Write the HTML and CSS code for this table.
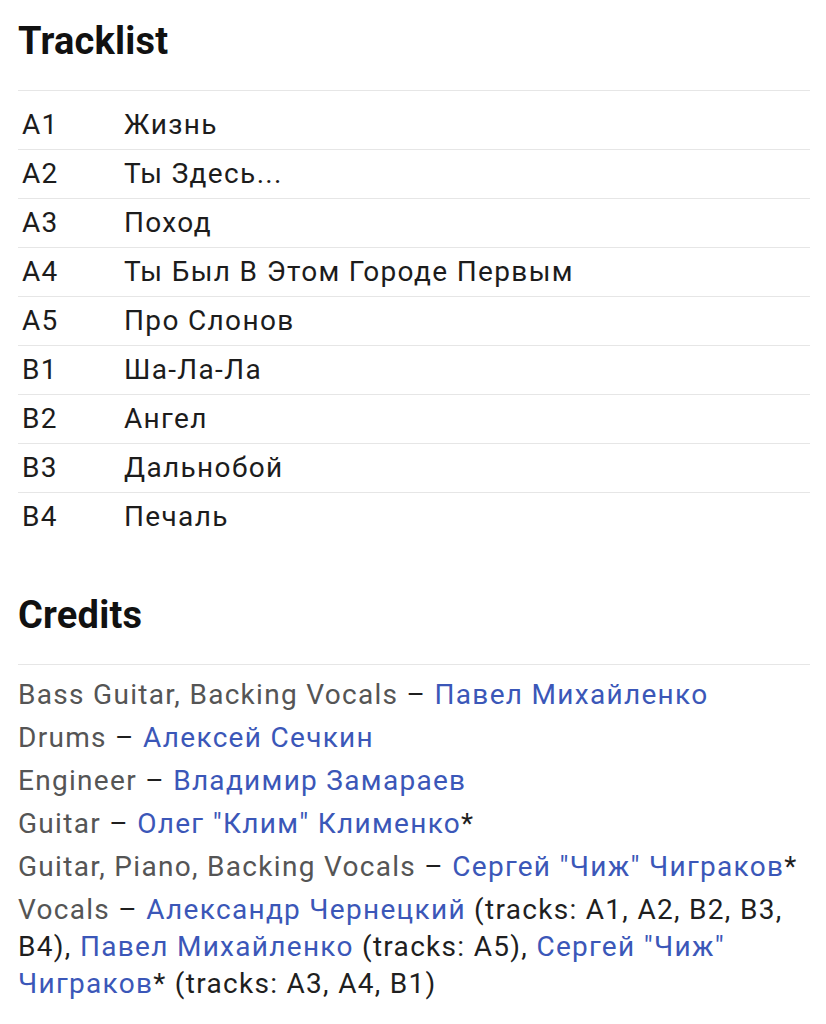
FILE: index.html
```html
<!DOCTYPE html>
<html lang="ru">
<head>
<meta charset="utf-8">
<title>Tracklist</title>
<link rel="stylesheet" href="styles.css">
</head>
<body>
<section class="section">
  <h2 class="section-title">Tracklist</h2>
  <div class="tracklist">
    <div class="track"><span class="pos">A1</span><span class="title">Жизнь</span></div>
    <div class="track"><span class="pos">A2</span><span class="title">Ты Здесь...</span></div>
    <div class="track"><span class="pos">A3</span><span class="title">Поход</span></div>
    <div class="track"><span class="pos">A4</span><span class="title">Ты Был В Этом Городе Первым</span></div>
    <div class="track"><span class="pos">A5</span><span class="title">Про Слонов</span></div>
    <div class="track"><span class="pos">B1</span><span class="title">Ша-Ла-Ла</span></div>
    <div class="track"><span class="pos">B2</span><span class="title">Ангел</span></div>
    <div class="track"><span class="pos">B3</span><span class="title">Дальнобой</span></div>
    <div class="track"><span class="pos">B4</span><span class="title">Печаль</span></div>
  </div>
</section>
<section class="section credits-section">
  <h2 class="section-title">Credits</h2>
  <ul class="credits">
    <li><span class="role">Bass Guitar, Backing Vocals</span> – <a href="#">Павел Михайленко</a></li>
    <li><span class="role">Drums</span> – <a href="#">Алексей Сечкин</a></li>
    <li><span class="role">Engineer</span> – <a href="#">Владимир Замараев</a></li>
    <li><span class="role">Guitar</span> – <a href="#">Олег "Клим" Клименко</a>*</li>
    <li><span class="role">Guitar, Piano, Backing Vocals</span> – <a href="#">Сергей "Чиж" Чиграков</a>*</li>
    <li><span class="role">Vocals</span> – <a href="#">Александр Чернецкий</a> (tracks: A1, A2, B2, B3, B4), <a href="#">Павел Михайленко</a> (tracks: A5), <a href="#">Сергей "Чиж" Чиграков</a>* (tracks: A3, A4, B1)</li>
  </ul>
</section>
</body>
</html>
```

FILE: styles.css
```css
html, body {
  margin: 0;
  padding: 0;
  background: #ffffff;
}

body {
  font-family: Roboto, "Noto Sans", sans-serif;
  color: #1f1f1f;
  padding: 18px 16px 0 18px;
}

.section-title {
  margin: 0;
  font-size: 38px;
  line-height: 46px;
  font-weight: 700;
  color: #111111;
  letter-spacing: 0.2px;
  padding-bottom: 26px;
  border-bottom: 1px solid #e6e6e6;
}

.tracklist {
  padding-top: 10px;
}

.track {
  display: grid;
  grid-template-columns: 106px 1fr;
  height: 48px;
  align-items: center;
  font-size: 28px;
  line-height: 48px;
  letter-spacing: 1.35px;
  color: #1c1c1c;
}

.track + .track {
  border-top: 1px solid #e6e6e6;
}

.pos {
  padding-left: 4px;
}

.credits-section {
  margin-top: 51px;
}

.credits {
  list-style: none;
  margin: 0;
  padding: 8px 0 0 0;
  font-size: 28px;
  line-height: 37px;
  letter-spacing: 1.3px;
  color: #1f1f1f;
}

.credits li {
  padding: 3px 0;
}

.role {
  color: #555555;
}

.credits a {
  color: #3b57b8;
  text-decoration: none;
}
```
